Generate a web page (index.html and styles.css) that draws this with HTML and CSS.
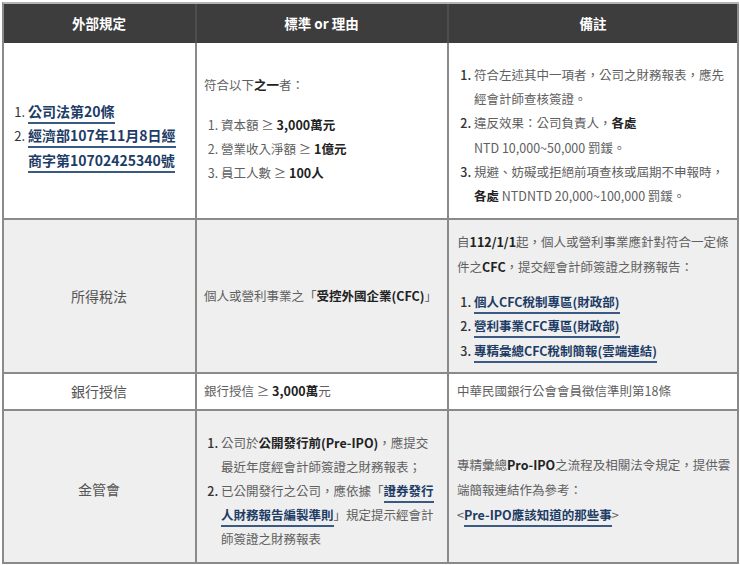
FILE: index.html
```html
<!DOCTYPE html>
<html lang="zh-Hant">
<head>
<meta charset="utf-8">
<title>外部規定</title>
<link rel="stylesheet" href="styles.css">
</head>
<body>
<div class="table">
  <div class="cell head">外部規定</div>
  <div class="cell head">標準 or 理由</div>
  <div class="cell head last">備註</div>

  <div class="cell r1 c1 pt10">
    <ol class="links-lg">
      <li><a class="lnk">公司法第20條</a></li>
      <li><a class="lnk">經濟部107年11月8日經商字第10702425340號</a></li>
    </ol>
  </div>
  <div class="cell r1 pb3">
    <p class="intro">符合以下<b>之一</b>者：</p>
    <ol class="plain grey-marker">
      <li>資本額 ≥ <b>3,000萬元</b></li>
      <li>營業收入淨額 ≥ <b>1億元</b></li>
      <li>員工人數 ≥ <b>100人</b></li>
    </ol>
  </div>
  <div class="cell r1 last pt10">
    <ol class="plain tight">
      <li>符合左述其中一項者，公司之財務報表，應先<br>經會計師查核簽證。</li>
      <li>違反效果：公司負責人，<b>各處</b><br>NTD 10,000~50,000 罰鍰。</li>
      <li>規避、妨礙或拒絕前項查核或屆期不申報時，<br><b>各處</b> NTDNTD 20,000~100,000 罰鍰。</li>
    </ol>
  </div>

  <div class="cell r2 c1 grey">所得稅法</div>
  <div class="cell r2 grey">
    <p class="one">個人或營利事業之「<b>受控外國企業(CFC)</b>」</p>
  </div>
  <div class="cell r2 grey last">
    <p class="cfc">自<b>112/1/1</b>起，個人或營利事業應針對符合一定條<br>件之<b>CFC</b>，提交經會計師簽證之財務報告：</p>
    <ol class="plain links-sm">
      <li><a class="lnk">個人CFC稅制專區(財政部)</a></li>
      <li><a class="lnk">營利事業CFC專區(財政部)</a></li>
      <li><a class="lnk">專精彙總CFC稅制簡報(雲端連結)</a></li>
    </ol>
  </div>

  <div class="cell r3 c1">銀行授信</div>
  <div class="cell r3"><p class="one">銀行授信 ≥ <b>3,000萬</b>元</p></div>
  <div class="cell r3 last"><p class="one">中華民國銀行公會會員徵信準則第18條</p></div>

  <div class="cell r4 c1 grey pt5">金管會</div>
  <div class="cell r4 grey pt9">
    <ol class="plain fsc">
      <li>公司於<b>公開發行前(Pre-IPO)</b>，應提交<br>最近年度經會計師簽證之財務報表；</li>
      <li>已公開發行之公司，應依據「<a class="lnk">證券發行<br>人財務報告編製準則</a>」規定提示經會計<br>師簽證之財務報表</li>
    </ol>
  </div>
  <div class="cell r4 grey last pt5">
    <p class="ipo">專精彙總<b>Pro-IPO</b>之流程及相關法令規定，提供雲<br>端簡報連結作為參考：<br>&lt;<a class="lnk">Pre-IPO應該知道的那些事</a>&gt;</p>
  </div>
</div>
</body>
</html>
```

FILE: styles.css
```css
* { box-sizing: border-box; }
html, body { margin: 0; padding: 0; background: #ffffff; }
body {
  font-family: "Noto Sans CJK TC", "Noto Sans", sans-serif;
  font-size: 12.5px;
  color: #606060;
}
b { color: #222222; font-weight: 700; }
p { margin: 0; }
ol { margin: 0; padding: 0; }

.table {
  margin: 2px 0 0 2px;
  width: 737px;
  display: grid;
  grid-template-columns: 193px 252px 290px;
  grid-template-rows: 39px 177px 154px 37px 153px;
  border-top: 2px solid #b4b4b4;
  border-left: 2px solid #8a8a8a;
}
.cell {
  display: flex;
  flex-direction: column;
  justify-content: center;
  padding: 0 8px 0 7px;
  border-right: 2px solid #8a8a8a;
  border-bottom: 2px solid #8a8a8a;
  line-height: 24.4px;
}
.head {
  background: #3d3d3d;
  color: #ffffff;
  font-weight: 700;
  font-size: 13.5px;
  text-align: center;
  align-items: center;
  border-bottom: none;
  border-right: 2px solid #4e4e4e;
}
.head.last { border-right: 2px solid #8a8a8a; }
.grey { background: #efefef; }
.c1 { align-items: center; text-align: center; font-size: 14px; color: #555555; }
.r1.c1 { align-items: flex-start; text-align: left; padding-left: 7px; }
.last { padding-left: 8px; }

.pt10 { padding-top: 10px; }
.pt9 { padding-top: 9px; }
.pt5 { padding-top: 5px; }
.pb3 { padding-bottom: 3px; }

.lnk {
  color: #1d3c66;
  font-weight: 700;
  text-decoration: none;
  border-bottom: 2px solid #3b5a83;
  padding-bottom: 1px;
}

.links-lg { padding-left: 17px; width: 176px; }
.links-lg li { font-size: 14px; line-height: 24.5px; color: #333333; }
.links-lg li::marker { color: #333333; font-size: 13px; }

.intro { margin-bottom: 16px; line-height: 24px; }
.plain { padding-left: 17px; }
.plain li { line-height: 24px; }
.plain li::marker { color: #333333; font-weight: 500; }
.grey-marker li::marker { color: #606060; font-weight: 400; }
.tight li { line-height: 24.2px; white-space: nowrap; }

.cfc { line-height: 25.5px; margin-bottom: 10px; white-space: nowrap; }
.links-sm li { line-height: 24.5px; }
.fsc li { white-space: nowrap; }
.ipo { line-height: 25px; white-space: nowrap; }
.one { white-space: nowrap; }
```
